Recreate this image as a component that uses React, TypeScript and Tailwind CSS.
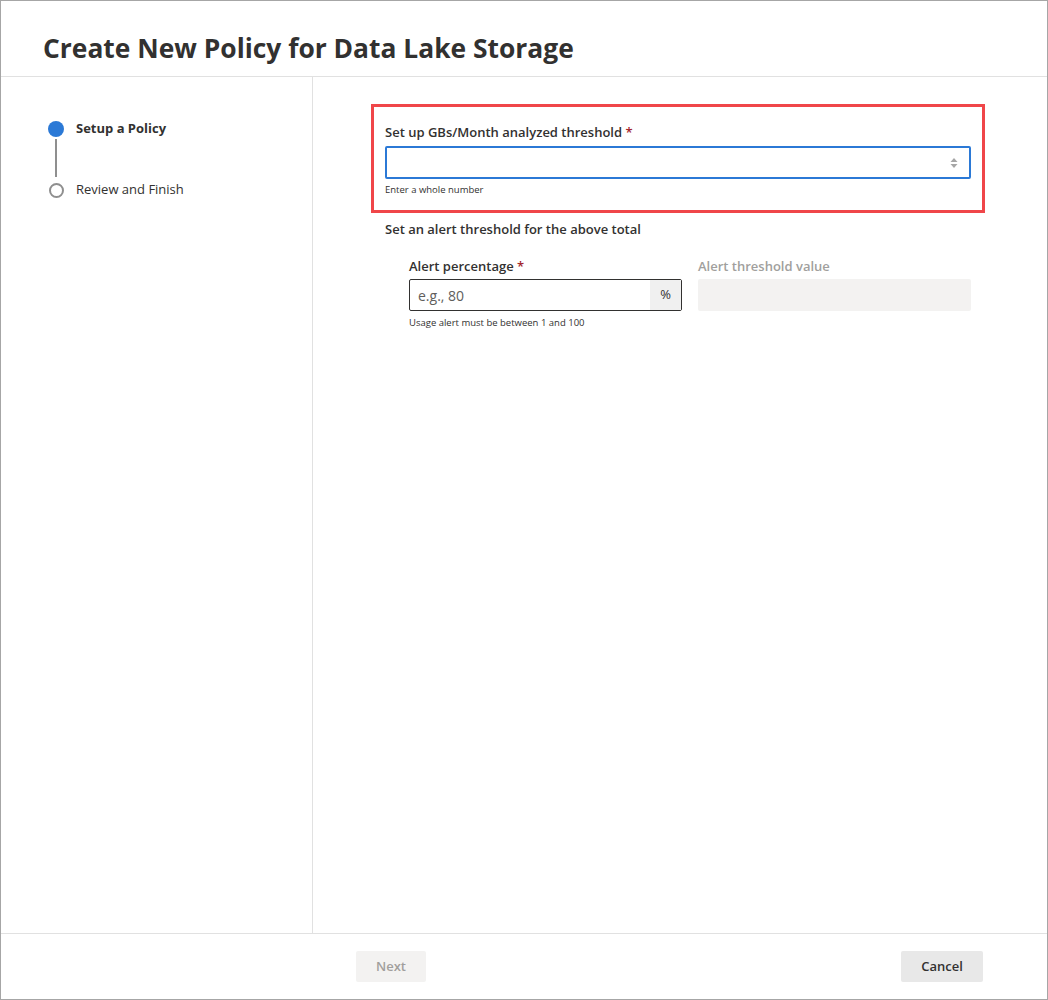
import React from "react";

const font = { fontFamily: '"Open Sans", "Noto Sans", Arial, sans-serif' };

export default function App() {
  return (
    <div
      className="w-[1048px] h-[1000px] border border-[#a6a6a6] bg-white flex flex-col text-[#323130]"
      style={font}
    >
      {/* Header */}
      <div className="h-[76px] shrink-0 border-b border-[#e1e1e1] flex items-center pl-[42px] pt-[20px]">
        <h1 className="text-[26.4px] font-bold text-[#323130] leading-none">
          Create New Policy for Data Lake Storage
        </h1>
      </div>

      {/* Body */}
      <div className="flex-1 flex min-h-0">
        {/* Left stepper */}
        <div className="w-[312px] shrink-0 border-r border-[#e1e1e1] pt-[44px] pl-[47px]">
          <div className="flex items-center gap-[12px] h-[16px]">
            <div className="w-[16px] h-[16px] rounded-full bg-[#2b79d6]" />
            <span className="text-[13px] font-bold">Setup a Policy</span>
          </div>
          <div className="ml-[7px] w-[2px] h-[38px] bg-[#8f8f8f] mt-[2px] mb-[3px]" />
          <div className="flex items-center gap-[12px] h-[20px]">
            <div className="ml-[1px] w-[15px] h-[15px] rounded-full border-2 border-[#8f8f8f]" />
            <span className="text-[13px]">Review and Finish</span>
          </div>
        </div>

        {/* Right content */}
        <div className="flex-1 pt-[27px] pl-[58px] pr-[62px]">
          <div className="border-[3px] border-[#f04649] pl-[11px] pr-[11px] pt-[16px] pb-[14px]">
            <div className="text-[13px] font-semibold h-[18px] leading-[18px]">
              Set up GBs/Month analyzed threshold <span className="text-[#a4262c]">*</span>
            </div>
            <div className="mt-[5px] h-[33px] border-2 border-[#2b79d6] rounded-[2px] flex items-center justify-end pr-[10px]">
              <svg width="10" height="16" viewBox="0 0 10 16">
                <path d="M5 3 L8.5 7 L1.5 7 Z" fill="#a6a6a6" />
                <path d="M5 13 L8.5 9 L1.5 9 Z" fill="#a6a6a6" />
              </svg>
            </div>
            <div className="text-[9.5px] mt-[5px] leading-[12px]">Enter a whole number</div>
          </div>

          <div className="pl-[14px] pr-[14px] mt-[7px]">
            <div className="text-[13px] font-semibold h-[18px] leading-[18px]">
              Set an alert threshold for the above total
            </div>
            <div className="pl-[24px] mt-[19px] flex gap-[16px]">
              <div className="flex-1">
                <div className="text-[13px] font-semibold h-[18px] leading-[18px]">
                  Alert percentage <span className="text-[#a4262c]">*</span>
                </div>
                <div className="mt-[4px] h-[32px] border border-[#323130] rounded-[2px] flex">
                  <div className="flex-1 flex items-center pl-[8px] text-[14px] text-[#605e5c]">
                    e.g., 80
                  </div>
                  <div className="w-[31px] bg-[#f0f0f0] flex items-center justify-center text-[13px] text-[#323130]">
                    %
                  </div>
                </div>
                <div className="text-[9.5px] mt-[6px] leading-[12px]">
                  Usage alert must be between 1 and 100
                </div>
              </div>
              <div className="flex-1">
                <div className="text-[13px] font-semibold h-[18px] leading-[18px] text-[#a19f9d]">
                  Alert threshold value
                </div>
                <div className="mt-[4px] h-[32px] rounded-[2px] bg-[#f3f2f1]" />
              </div>
            </div>
          </div>
        </div>
      </div>

      {/* Footer */}
      <div className="h-[66px] shrink-0 border-t border-[#e1e1e1] flex items-start pt-[17px] pl-[355px] pr-[64px]">
        <button className="w-[70px] h-[31px] rounded-[2px] bg-[#f3f2f1] text-[#a19f9d] text-[13px] font-semibold">
          Next
        </button>
        <div className="flex-1" />
        <button className="w-[82px] h-[31px] rounded-[2px] bg-[#e8e8e8] text-[#323130] text-[13px] font-semibold">
          Cancel
        </button>
      </div>
    </div>
  );
}
